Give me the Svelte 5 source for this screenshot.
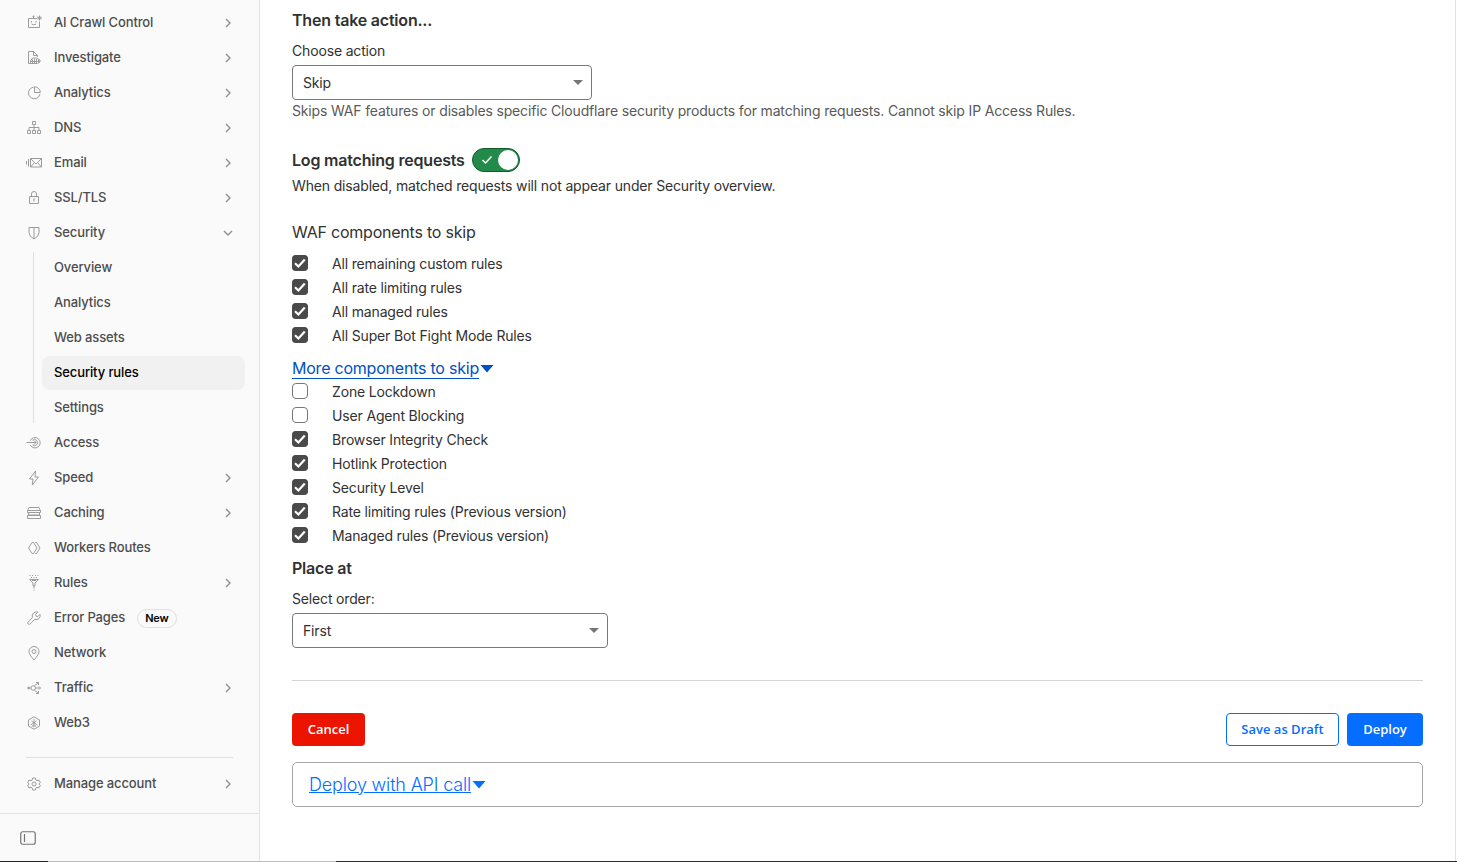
<script>
  const nav = [
    { label: 'AI Crawl Control', icon: 'robot', more: true },
    { label: 'Investigate', icon: 'report', more: true },
    { label: 'Analytics', icon: 'pie', more: true },
    { label: 'DNS', icon: 'tree', more: true },
    { label: 'Email', icon: 'mail', more: true },
    { label: 'SSL/TLS', icon: 'lock', more: true },
    {
      label: 'Security',
      icon: 'shield',
      more: true,
      children: ['Overview', 'Analytics', 'Web assets', 'Security rules', 'Settings']
    },
    { label: 'Access', icon: 'access' },
    { label: 'Speed', icon: 'bolt', more: true },
    { label: 'Caching', icon: 'drive', more: true },
    { label: 'Workers Routes', icon: 'workers' },
    { label: 'Rules', icon: 'funnel', more: true },
    { label: 'Error Pages', icon: 'wrench', badge: 'New' },
    { label: 'Network', icon: 'pin' },
    { label: 'Traffic', icon: 'traffic', more: true },
    { label: 'Web3', icon: 'web3' }
  ]

  const icons = {
    robot: 'M11 3.500H2.500v9h11V6.500M7.500 3.500V.500M6.500 1.500h2M5.500 6v1.500M10 6v1.500M5.500 9q2.200 1.800 4.500 0M13.500 .500v5M11 3h5M12 1.500l3 3M15 1.500l-3 3',
    report: 'M5 13.500H2.500v-12h5l4 4V7M7.500 1.500v4h4M4.500 13v-2l2-3h4l3.500 2v2l-2.500 1.500H5M6.500 9.500v3.500M8.500 9v4M10.500 9v4M12.500 9.500v3M5 11.500h9',
    pie: 'M7.500 2.200a5.800 5.800 0 1 0 6.500 6.800M8.500 1.800V7.500h5.800A5.800 5.800 0 0 0 8.500 1.800z',
    tree: 'M6.500 1.500h3v3h-3zM8 4.500v6M3 10.500v-3h10v3M1.500 10.500h3v3h-3zM6.500 10.500h3v3h-3zM11.500 10.500h3v3h-3z',
    mail: 'M4.500 3.500h11v8.500h-11zM4.500 3.500L10 9l5.500-5.500M4.500 12l4-4.500M15.500 12l-4-4.500M2.500 4v7.500M.500 6v3.500',
    lock: 'M3.500 6.500h9v7h-9zM5.500 6.500v-2.500a2.500 2.500 0 0 1 5 0v2.500M8 8.500v3M7.500 9h1',
    shield: 'M3 2.500h10v5q0 4-5 6.500Q3 11.500 3 7.500zM8 2.500v11.500',
    access: 'M.5 7.500h9.500M8 5.500l2 2-2 2M4.300 5.500a5.200 5.200 0 1 1 0 4.500M6.500 5.200a3.100 3.100 0 1 1 0 4.800',
    bolt: 'M9.500 1L3.500 9H7l-.7 6L12.500 7H9z',
    drive: 'M1.500 6l1.500-3.500h10L14.500 6v1.500h-13zM1.500 5.500h13M2.500 7.500v2.500h11V7.500M1.500 10.500h13v3h-13z',
    workers: 'M6 2.500L2.500 8 6 13.500M6 2.500h1.500L11 8l-3.500 5.500H6M9 2.500h1.500L14 8l-3.500 5.500H9',
    funnel: 'M3.500 .500h1M6 .500h1M9 .500h1M11.500 .500h1M5 2.500h1M7.500 2.500h1M10 2.500h1M3.500 4.500L7 8v3h2V8l3.500-3.500zM6 5.500h4M8 11v2.500M7.500 15h1',
    wrench: 'M1.900 12.200L6.300 7.800Q5.600 4.700 7.700 2.900 9.700 1.300 12 2.100L9.600 4.500l.4 1.700 1.800.4L14 4.300q.700 2.600-1 4.200-1.600 1.500-4.300.8L4.200 13.900q-1 .900-2 0-1.200-.8-.3-1.700z',
    pin: 'M8 15Q3 9.500 3 6.500a5 5 0 0 1 10 0Q13 9.500 8 15zM10 6.500a2 2 0 1 1-4 0 2 2 0 0 1 4 0z',
    traffic: 'M9.500 8a2.300 2.300 0 1 1-4.600 0 2.300 2.300 0 0 1 4.600 0zM1.500 8h3.500M3 6.800v2.400l-1.500-1.200zM9.500 8h5M13 6.500L14.500 8 13 9.500M8.500 5.800l4-3.300M10 2.500h2.500v2.500M8.500 10.200l4 3.300M10 13.500h2.500V11',
    web3: 'M8 1.800L13.500 4.900v6.200L8 14.200l-5.500-3.100V4.900zM8 4v4l3.500 2M8 8l-3.500 2M5.500 6L8 8l2.500-2M8 8v4M6 11h4',
    gear: 'M6.700 2h2.600l.5 2 1.200.7 2-.6 1.300 2.300L12.900 8l1.400 1.600-1.300 2.300-2-.6-1.200.7-.5 2H6.700l-.5-2-1.200-.7-2 .6-1.300-2.300L3.100 8 1.700 6.400 3 4.100l2 .6L6.200 4zM10 8a2 2 0 1 1-4 0 2 2 0 0 1 4 0z'
  }

  let components = [
    { label: 'All remaining custom rules', checked: true },
    { label: 'All rate limiting rules', checked: true },
    { label: 'All managed rules', checked: true },
    { label: 'All Super Bot Fight Mode Rules', checked: true }
  ]
  let moreComponents = [
    { label: 'Zone Lockdown', checked: false },
    { label: 'User Agent Blocking', checked: false },
    { label: 'Browser Integrity Check', checked: true },
    { label: 'Hotlink Protection', checked: true },
    { label: 'Security Level', checked: true },
    { label: 'Rate limiting rules (Previous version)', checked: true },
    { label: 'Managed rules (Previous version)', checked: true }
  ]

  const current = 'Security rules'
  let showMore = true
  let logging = true
</script>

{#snippet navIcon(name)}
  <svg class="icon" width="16" height="16" viewBox="0 0 16 16"><path d={icons[name]} /></svg>
{/snippet}

{#snippet chevron(open)}
  <svg class="chevron" class:open width="12" height="12" viewBox="0 0 12 12"><path d="M4 2l4 4-4 4" /></svg>
{/snippet}

{#snippet caret()}
  <svg class="caret" width="14" height="8" viewBox="0 0 14 8"><path d="M.5 0h13L7 7.500z" /></svg>
{/snippet}

{#snippet checks(list)}
  <ul class="checks">
    {#each list as item}
      <li>
        <label>
          <input type="checkbox" bind:checked={item.checked} />
          <span class="box">
            {#if item.checked}
              <svg width="16" height="16" viewBox="0 0 16 16"><path d="M3 8.300l3.400 3.200 6.400-6.900" /></svg>
            {/if}
          </span>
          {item.label}
        </label>
      </li>
    {/each}
  </ul>
{/snippet}

<div class="page">
  <div class="body">
    <aside>
      <nav>
        {#each nav as item}
          <a class="row" href="#top">
            {@render navIcon(item.icon)}
            <span class="name">{item.label}</span>
            {#if item.badge}<span class="badge">{item.badge}</span>{/if}
            {#if item.more}{@render chevron(!!item.children)}{/if}
          </a>
          {#if item.children}
            <div class="sub">
              {#each item.children as child}
                <a href="#top" class:active={child === current}>{child}</a>
              {/each}
            </div>
          {/if}
        {/each}
        <hr />
        <a class="row" href="#top">
          {@render navIcon('gear')}
          <span class="name">Manage account</span>
          {@render chevron(false)}
        </a>
      </nav>
      <footer>
        <svg width="16" height="14" viewBox="0 0 16 14">
          <rect x=".75" y=".75" width="14.500" height="12.500" rx="2" />
          <path d="M4.500 3v8" />
        </svg>
      </footer>
    </aside>

    <main>
      <h2>Then take action...</h2>
      <div class="label">Choose action</div>
      <button class="select">
        Skip
        <svg width="10" height="5" viewBox="0 0 10 5"><path d="M0 0h10L5 5z" /></svg>
      </button>
      <p class="hint">
        Skips WAF features or disables specific Cloudflare security products for matching requests. Cannot skip IP Access Rules.
      </p>

      <div class="log">
        <h2>Log matching requests</h2>
        <button class="toggle" class:on={logging} aria-label="Log matching requests" on:click={() => (logging = !logging)}>
          <svg width="12" height="10" viewBox="0 0 12 10"><path d="M1.500 5l3 3 6-6.500" /></svg>
          <span class="knob"></span>
        </button>
      </div>
      <p>When disabled, matched requests will not appear under Security overview.</p>

      <h3>WAF components to skip</h3>
      {@render checks(components)}
      <button class="more" on:click={() => (showMore = !showMore)}>
        <span>More components to skip</span>{@render caret()}
      </button>
      {#if showMore}{@render checks(moreComponents)}{/if}

      <h2>Place at</h2>
      <div class="label">Select order:</div>
      <button class="select wide">
        First
        <svg width="10" height="5" viewBox="0 0 10 5"><path d="M0 0h10L5 5z" /></svg>
      </button>

      <div class="actions">
        <button class="btn cancel">Cancel</button>
        <button class="btn draft">Save as Draft</button>
        <button class="btn deploy">Deploy</button>
      </div>
      <div class="api">
        <button><span>Deploy with API call</span>{@render caret()}</button>
      </div>
    </main>
  </div>
  <div class="strip"></div>
</div>

<style>
  :global(body) {
    margin: 0;
    background: #fff;
    overflow: hidden;
  }
  .page {
    height: 862px;
    display: flex;
    flex-direction: column;
    font-family: Inter, 'Liberation Sans', sans-serif;
    font-size: 14px;
    line-height: 20px;
    letter-spacing: -0.16px;
    color: #313131;
  }
  * {
    box-sizing: border-box;
  }
  button {
    font: inherit;
    letter-spacing: inherit;
    color: inherit;
    border: none;
    background: none;
    padding: 0;
    cursor: pointer;
  }
  .body {
    flex: 1;
    display: flex;
    min-height: 0;
    border-right: 1px solid #e1e1e1;
    margin-right: 1px;
  }
  .strip {
    height: 1px;
    background: linear-gradient(90deg, #222 48px, #bdbdbd 48px, #bdbdbd 336px, #2b2b2e 336px);
  }

  aside {
    width: 260px;
    display: flex;
    flex-direction: column;
    background: #fafafa;
    border-right: 1px solid #e2e2e2;
    font-size: 13px;
    font-weight: 500;
    letter-spacing: -0.12px;
  }
  nav {
    flex: 1;
    padding: 5px 26px 0;
  }
  nav a {
    color: #4d4d4d;
    text-decoration: none;
  }
  .row {
    height: 35px;
    display: flex;
    align-items: center;
  }
  .name {
    margin-bottom: 1px;
  }
  .icon {
    margin: 1px 12px 0 0;
    fill: none;
    stroke: #9c9c9c;
    stroke-width: 1;
  }
  .chevron {
    margin: 1px -1px 0 auto;
    fill: none;
    stroke: #8f8f8f;
    stroke-width: 1.4;
  }
  .chevron.open {
    transform: rotate(90deg);
  }
  .badge {
    margin: 2px 0 0 12px;
    height: 19px;
    padding: 0 7px;
    border: 1px solid #e0e0e0;
    border-radius: 10px;
    font-size: 11px;
    line-height: 17px;
    font-weight: 600;
    letter-spacing: -0.2px;
    color: #000;
  }
  .sub {
    margin: 2px -12px 2px 7px;
    border-left: 1px solid #e0e0e0;
    padding-left: 8px;
    display: flex;
    flex-direction: column;
    gap: 1px;
  }
  .sub a {
    height: 34px;
    padding-left: 12px;
    line-height: 33px;
    border-radius: 8px;
  }
  .sub a:first-child {
    margin-top: -1px;
  }
  .sub a:last-child {
    margin-bottom: -2px;
  }
  .sub .active {
    background: #f1f1f1;
    color: #000;
  }
  nav hr {
    margin: 17px 0 8px;
    border: none;
    border-top: 1px solid #e0e0e0;
  }
  footer {
    height: 48px;
    border-top: 1px solid #e2e2e2;
    display: flex;
    align-items: center;
    padding-left: 20px;
  }
  footer svg {
    fill: none;
    stroke: #757575;
    stroke-width: 1.2;
  }

  main {
    flex: 1;
    padding: 8px 32px 0;
  }
  h2,
  h3 {
    margin: 0;
    font-size: 16px;
    line-height: 24px;
    font-weight: 600;
    letter-spacing: -0.2px;
  }
  h3 {
    margin-top: 24px;
    font-weight: 400;
    letter-spacing: -0.22px;
  }
  p {
    margin: 4px 0 0;
  }
  .label {
    margin: 9px 0 4px;
  }
  .select {
    width: 300px;
    height: 35px;
    padding: 0 8px 0 10px;
    border: 1px solid #797979;
    border-radius: 4px;
    display: flex;
    align-items: center;
    justify-content: space-between;
  }
  .select.wide {
    width: 316px;
  }
  .select svg {
    fill: #72777b;
  }
  .hint {
    margin-top: 1px;
    color: #595959;
  }
  .log {
    margin-top: 27px;
    display: flex;
    gap: 7px;
  }
  .toggle {
    width: 48px;
    height: 24px;
    padding: 0 1px 0 8px;
    border: 1px solid #145a2c;
    border-radius: 12px;
    background: #999;
    display: flex;
    align-items: center;
    justify-content: space-between;
  }
  .toggle.on {
    background: #228b49;
  }
  .toggle svg {
    fill: none;
    stroke: #fff;
    stroke-width: 1.5;
  }
  .knob {
    width: 20px;
    height: 20px;
    border-radius: 50%;
    background: #fff;
  }

  .checks {
    list-style: none;
    margin: 8px 0;
    padding: 0;
  }
  .more + .checks {
    margin-top: 0;
  }
  .checks label {
    height: 24px;
    display: flex;
    align-items: center;
  }
  .checks input {
    display: none;
  }
  .box {
    width: 16px;
    height: 16px;
    margin: -2px 24px 0 0;
    border: 1px solid #797979;
    border-radius: 4px;
  }
  .box svg {
    display: block;
    margin: -1px;
    border-radius: 4px;
    background: #4a4a4a;
    fill: none;
    stroke: #fff;
    stroke-width: 2.2;
  }
  .more {
    height: 24px;
    display: flex;
    align-items: center;
    font-size: 16px;
    letter-spacing: -0.22px;
    color: #0051c3;
  }
  .more span {
    height: 22px;
    line-height: 23px;
    border-bottom: 1px solid #0051c3;
  }
  .caret {
    margin-left: 1px;
    fill: currentColor;
  }
  .more .caret {
    margin-top: 2px;
  }

  .actions {
    margin-top: 32px;
    padding-top: 32px;
    border-top: 1px solid #d5d5d5;
    display: flex;
    gap: 8px;
  }
  .btn {
    height: 33px;
    padding-bottom: 2px;
    border-radius: 4px;
    font-family: 'Open Sans', 'Noto Sans', sans-serif;
    font-size: 13px;
    font-weight: 600;
    letter-spacing: 0;
    color: #fff;
  }
  .cancel {
    width: 73px;
    margin-right: auto;
    background: #eb1400;
  }
  .draft {
    width: 113px;
    border: 1px solid #056dff;
    color: #056dff;
  }
  .deploy {
    width: 76px;
    background: #056dff;
  }
  .api {
    margin-top: 16px;
    height: 45px;
    padding-left: 16px;
    border: 1px solid #a6a6a6;
    border-radius: 5px;
    display: flex;
    align-items: center;
  }
  .api button {
    display: flex;
    align-items: center;
    font-size: 18px;
    font-weight: 300;
    letter-spacing: -0.17px;
    color: #056dff;
  }
  .api span {
    text-decoration: underline;
  }
</style>
